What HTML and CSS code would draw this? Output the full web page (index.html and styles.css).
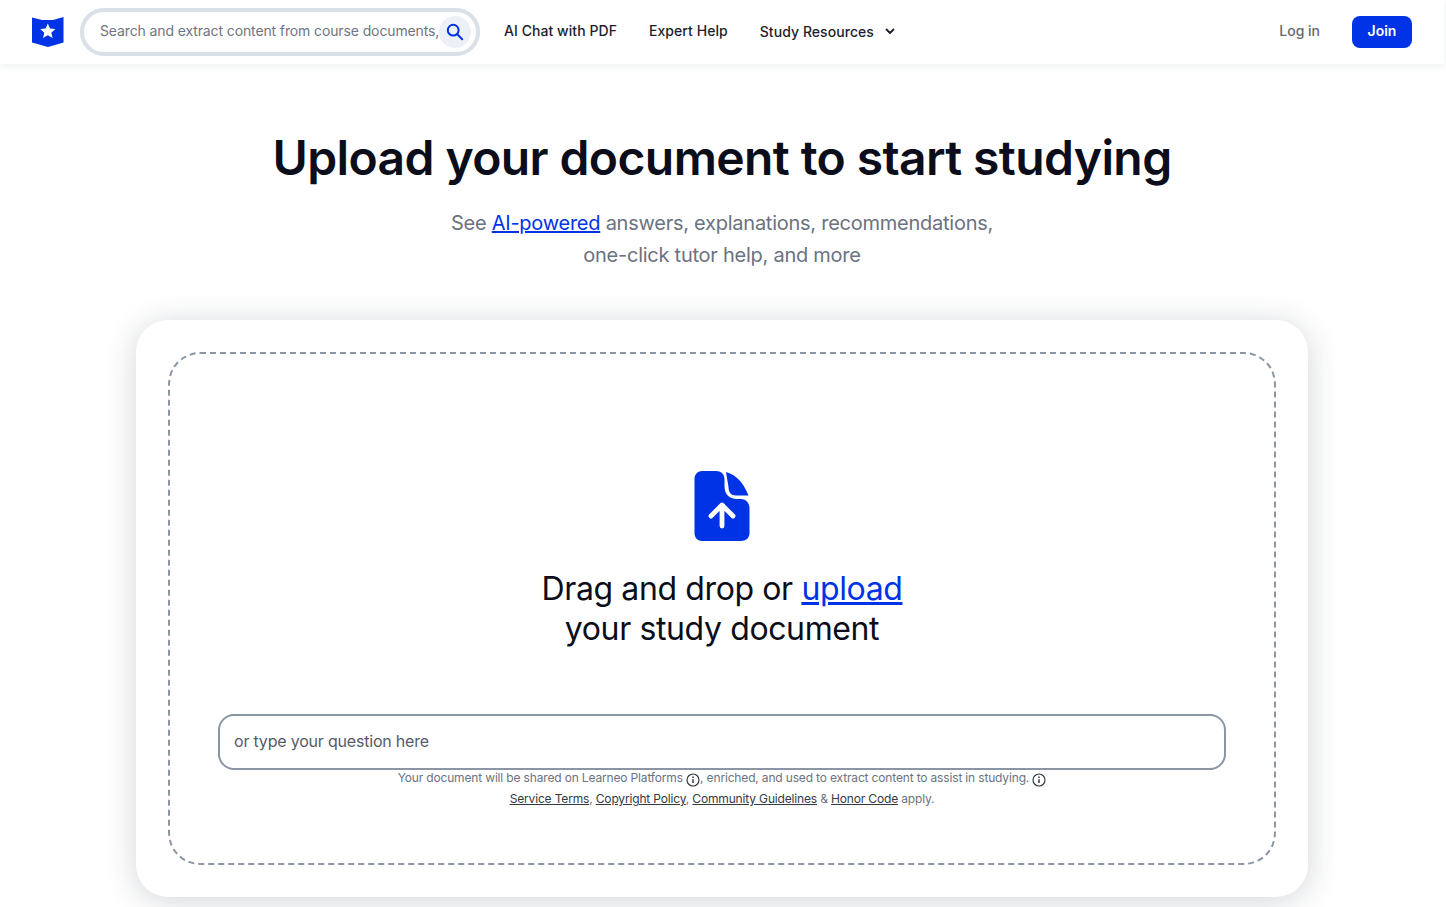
FILE: index.html
```html
<!DOCTYPE html>
<html lang="en">
<head>
    <meta charset="UTF-8">
    <meta name="viewport" content="width=device-width, initial-scale=1.0">
    <title>Upload your document to start studying</title>
    <link rel="stylesheet" href="styles.css">
</head>
<body>
    <div class="page">
        <header class="topbar">
            <a class="logo" href="#">
                <svg width="32" height="32" viewBox="0 0 32 32">
                    <path d="M0 1.5 L10 4 L21 4 L31.5 1 L31.5 26.5 L16 31 L0 26.5 Z" fill="#0033e6"/>
                    <path d="M15.8 7.5 L18 12.6 L23.4 13.1 L19.3 16.7 L20.6 22 L15.8 19.2 L11 22 L12.3 16.7 L8.2 13.1 L13.6 12.6 Z" fill="#fff"/>
                </svg>
            </a>
            <div class="search">
                <span class="search-text">Search and extract content from course documents,</span>
                <span class="search-btn">
                    <svg width="20" height="20" viewBox="0 0 20 20" fill="none" stroke="#0033e6" stroke-width="2" stroke-linecap="round">
                        <circle cx="8.2" cy="8.2" r="5.4"/>
                        <path d="M12.3 12.3 L17.2 17.2"/>
                    </svg>
                </span>
            </div>
            <nav class="nav">
                <a href="#">AI Chat with PDF</a>
                <a href="#">Expert Help</a>
                <a class="nav-drop" href="#">Study Resources
                    <svg width="10" height="7" viewBox="0 0 10 7" fill="none" stroke="#1c1e2b" stroke-width="1.8" stroke-linecap="round" stroke-linejoin="round">
                        <path d="M1.5 1.5 L5 5 L8.5 1.5"/>
                    </svg>
                </a>
            </nav>
            <div class="auth">
                <a class="login" href="#">Log in</a>
                <a class="join" href="#">Join</a>
            </div>
        </header>

        <main class="content">
            <h1>Upload your document to start studying</h1>
            <p class="sub">See <a href="#">AI-powered</a> answers, explanations, recommendations,<br>one-click tutor help, and more</p>

            <section class="card">
                <div class="dropzone">
                    <svg class="file-icon" width="56" height="70" viewBox="0 0 56 70">
                        <path d="M8 0 H22 C27 0 30.5 3 30.5 8 V15 C30.5 23 35 28 43 28 H47 C52 28 55.5 32 55.5 37 V62 C55.5 67 52 70 47 70 H8 C4 70 0.5 67 0.5 62 V8 C0.5 3 4 0 8 0 Z" fill="#0033e6"/>
                        <path d="M32 1 C43 4 50 13 54.5 24.5 H42 C37 24.5 34.5 21 34.5 16 Z" fill="#0033e6"/>
                        <path d="M28 55 V35 M17 45 L28 34 L39 45" fill="none" stroke="#fff" stroke-width="4.8" stroke-linecap="round" stroke-linejoin="round"/>
                    </svg>
                    <h2>Drag and drop or <a href="#">upload</a><br>your study document</h2>
                    <div class="question">or type your question here</div>
                    <p class="legal">Your document will be shared on Learneo Platforms
                        <svg class="info" width="14" height="14" viewBox="0 0 14 14" fill="none" stroke="#333a44" stroke-width="1.2"><circle cx="7" cy="7" r="6"/><path d="M7 6.2 V10" stroke-width="1.5"/><path d="M7 3.6 V5" stroke-width="1.5"/></svg>, enriched, and used to extract content to assist in studying.
                        <svg class="info" width="14" height="14" viewBox="0 0 14 14" fill="none" stroke="#333a44" stroke-width="1.2"><circle cx="7" cy="7" r="6"/><path d="M7 6.2 V10" stroke-width="1.5"/><path d="M7 3.6 V5" stroke-width="1.5"/></svg>
                        <br><a href="#">Service Terms</a>, <a href="#">Copyright Policy</a>, <a href="#">Community Guidelines</a> &amp; <a href="#">Honor Code</a> apply.</p>
                </div>
            </section>
        </main>
    </div>
</body>
</html>
```

FILE: styles.css
```css
html, body {
    margin: 0;
    padding: 0;
    height: 907px;
    overflow: hidden;
    background: #fff;
}

body {
    font-family: "Inter", "Liberation Sans", sans-serif;
    color: #0b0d1a;
}

a {
    color: inherit;
    text-decoration: none;
}

.page {
    width: 1444px;
}

.topbar {
    display: flex;
    align-items: center;
    height: 64px;
    padding: 0 32px;
    box-sizing: border-box;
    background: #fff;
    box-shadow: 0 2px 8px rgba(30, 45, 70, 0.08);
}

.logo {
    display: flex;
    width: 32px;
    margin-right: 16px;
}

.search {
    display: flex;
    align-items: center;
    justify-content: space-between;
    width: 400px;
    height: 48px;
    box-sizing: border-box;
    padding: 0 12px 0 16px;
    border: 4px solid #d9e0e7;
    border-radius: 24px;
    overflow: hidden;
}

.search-text {
    flex: 1;
    padding-bottom: 4px;
    font-size: 14px;
    letter-spacing: -0.12px;
    color: #6f7584;
    white-space: nowrap;
}

.search-btn {
    display: flex;
    align-items: center;
    justify-content: center;
    flex-shrink: 0;
    width: 32px;
    height: 32px;
    margin-right: -4px;
    margin-bottom: 1px;
    border-radius: 50%;
    background: #edf0f6;
}

.nav {
    display: flex;
    align-items: center;
    gap: 32px;
    margin-left: 24px;
    padding-bottom: 4px;
    font-size: 14px;
    font-weight: 500;
    letter-spacing: 0.06px;
    color: #1c1e2b;
}

.nav-drop {
    display: flex;
    align-items: center;
    gap: 11px;
    padding-top: 2px;
}

.auth {
    display: flex;
    align-items: center;
    gap: 32px;
    margin-left: auto;
    font-size: 14px;
    font-weight: 500;
}

.login {
    padding-bottom: 4px;
    color: #616875;
}

.join {
    width: 60px;
    height: 32px;
    line-height: 30px;
    text-align: center;
    border-radius: 8px;
    background: #0033e6;
    color: #fff;
    font-weight: 600;
}

.content {
    display: flex;
    flex-direction: column;
    align-items: center;
    padding-top: 62px;
}

h1 {
    margin: 0;
    font-size: 48px;
    line-height: 64px;
    font-weight: 600;
    letter-spacing: -0.6px;
    color: #0b0d1a;
}

.sub {
    margin: 17px 0 0;
    font-size: 20px;
    line-height: 32px;
    letter-spacing: -0.25px;
    text-align: center;
    color: #6b7280;
}

.sub a, h2 a {
    color: #0033e6;
    text-decoration: underline;
}

.card {
    width: 1172px;
    height: 577px;
    margin-top: 49px;
    padding: 32px;
    box-sizing: border-box;
    background: #fff;
    border-radius: 32px;
    box-shadow: 0 4px 32px rgba(30, 45, 70, 0.2);
}

.dropzone {
    display: flex;
    flex-direction: column;
    align-items: center;
    height: 513px;
    box-sizing: border-box;
    padding: 117px 48px 0;
    border: 2px dashed #8b95a3;
    border-radius: 32px;
}

.file-icon {
    display: block;
}

h2 {
    margin: 28px 0 0;
    font-size: 32px;
    line-height: 40px;
    font-weight: 400;
    letter-spacing: -0.38px;
    text-align: center;
    color: #0b0d1a;
}

.question {
    width: 100%;
    height: 56px;
    margin-top: 65px;
    padding: 0 14px;
    box-sizing: border-box;
    border: 2px solid #8b95a3;
    border-radius: 16px;
    font-size: 16px;
    line-height: 50px;
    letter-spacing: -0.2px;
    color: #555b66;
}

.legal {
    margin: -3px 0 0;
    font-size: 12px;
    line-height: 21px;
    letter-spacing: -0.16px;
    text-align: center;
    color: #6b7280;
}

.legal a {
    color: #333a44;
    text-decoration: underline;
}

.info {
    vertical-align: -5px;
}
```
